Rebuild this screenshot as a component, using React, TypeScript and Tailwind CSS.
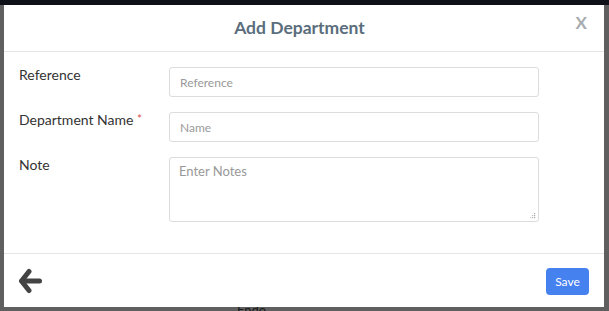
import React from "react";

export default function App() {
  return (
    <div
      className="relative w-[609px] h-[311px] overflow-hidden bg-[#5f5f5f]"
      style={{ fontFamily: "Lato, 'Open Sans', sans-serif" }}
    >
      <div className="h-[5px] bg-[#0e1218]" />
      <div className="absolute left-[237px] top-[302px] text-[13px] leading-[16px] text-[#1a1a1a]">Endo</div>

      <div className="absolute left-[4px] top-[5px] w-[600px] h-[302px] bg-white flex flex-col">
        {/* header */}
        <div className="relative h-[47px] shrink-0 border-b border-[#e5e5e5] flex items-center justify-center pr-[9px]">
          <h4 className="text-[17.5px] font-bold text-[#5a6d7c] leading-none">Add Department</h4>
          <button className="absolute right-[17px] top-[9px] text-[17px] font-bold text-[#a7acb1] leading-none">
            X
          </button>
        </div>

        {/* body */}
        <div className="flex-1 pt-[13px] pl-[15px] flex flex-col gap-[13px]">
          <div className="flex">
            <label className="w-[150px] text-[14px] leading-[20px] text-[#333]">Reference</label>
            <input
              className="mt-[2px] w-[370px] h-[30px] border border-[#dcdcdc] rounded-[3px] px-[10px] text-[12px] placeholder:text-[#999] outline-none"
              placeholder="Reference"
            />
          </div>
          <div className="flex">
            <label className="w-[150px] text-[14px] leading-[20px] text-[#333]">
              Department Name <span className="text-[#d9534f] text-[12px] relative -top-[2px]">*</span>
            </label>
            <input
              className="mt-[2px] w-[370px] h-[30px] border border-[#dcdcdc] rounded-[3px] px-[10px] text-[12px] placeholder:text-[#999] outline-none"
              placeholder="Name"
            />
          </div>
          <div className="flex">
            <label className="w-[150px] text-[14px] leading-[20px] text-[#333]">Note</label>
            <div className="relative mt-[2px] w-[370px] h-[65px]">
              <textarea
                className="w-full h-full border border-[#dcdcdc] rounded-[3px] px-[9px] py-[4px] text-[13px] placeholder:text-[#999] outline-none resize-none block"
                placeholder="Enter Notes"
              />
              <svg width="6" height="6" viewBox="0 0 6 6" className="absolute right-[3px] bottom-[3px]">
                <rect x="4" y="0" width="1.2" height="1.2" fill="#aaa" />
                <rect x="4" y="2" width="1.2" height="1.2" fill="#aaa" />
                <rect x="4" y="4" width="1.2" height="1.2" fill="#aaa" />
                <rect x="2" y="2" width="1.2" height="1.2" fill="#bbb" />
                <rect x="2" y="4" width="1.2" height="1.2" fill="#bbb" />
                <rect x="0" y="4" width="1.2" height="1.2" fill="#ccc" />
              </svg>
            </div>
          </div>
        </div>

        {/* footer */}
        <div className="h-[54px] shrink-0 border-t border-[#e5e5e5] flex items-center justify-between pl-[14px] pr-[15px]">
          <svg width="25" height="26" viewBox="0 0 25 26" className="mt-[1px]">
            <polyline
              points="11,3.5 3.5,13 11,22.5"
              fill="none"
              stroke="#444"
              strokeWidth="5"
              strokeLinecap="round"
              strokeLinejoin="round"
            />
            <line x1="4" y1="13" x2="21.5" y2="13" stroke="#444" strokeWidth="5" strokeLinecap="round" />
          </svg>
          <button className="w-[43px] h-[27px] rounded-[4px] bg-[#4682ef] text-white text-[12px] mt-[2px]">
            Save
          </button>
        </div>
      </div>
    </div>
  );
}
